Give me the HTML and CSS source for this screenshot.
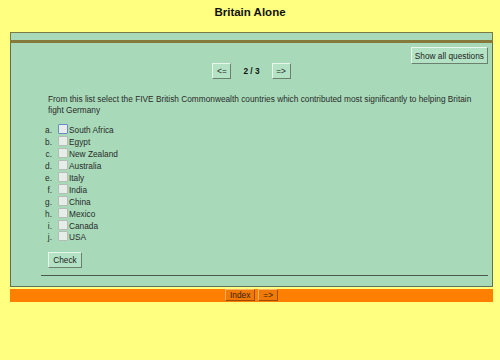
FILE: index.html
```html
<!DOCTYPE html>
<html>
<head>
<meta charset="utf-8">
<title>Britain Alone</title>
<link rel="stylesheet" href="styles.css">
</head>
<body>
<h1 class="title">Britain Alone</h1>
<div class="frame">
  <div class="topbar"></div>
  <div class="panel">
    <div class="toolbar"><button class="btn showall">Show all questions</button></div>
    <div class="nav">
      <button class="btn nav-btn">&lt;=</button>
      <span class="count">2 / 3</span>
      <button class="btn nav-btn">=&gt;</button>
    </div>
    <p class="question">From this list select the FIVE British Commonwealth countries which contributed most significantly to helping Britain fight Germany</p>
    <ol class="options">
      <li><span class="letter">a.</span><span class="box focus"></span><span class="label">South Africa</span></li>
      <li><span class="letter">b.</span><span class="box"></span><span class="label">Egypt</span></li>
      <li><span class="letter">c.</span><span class="box"></span><span class="label">New Zealand</span></li>
      <li><span class="letter">d.</span><span class="box"></span><span class="label">Australia</span></li>
      <li><span class="letter">e.</span><span class="box"></span><span class="label">Italy</span></li>
      <li><span class="letter">f.</span><span class="box"></span><span class="label">India</span></li>
      <li><span class="letter">g.</span><span class="box"></span><span class="label">China</span></li>
      <li><span class="letter">h.</span><span class="box"></span><span class="label">Mexico</span></li>
      <li><span class="letter">i.</span><span class="box"></span><span class="label">Canada</span></li>
      <li><span class="letter">j.</span><span class="box"></span><span class="label">USA</span></li>
    </ol>
    <div class="actions"><button class="btn check">Check</button></div>
    <div class="rule"></div>
  </div>
  <div class="footer">
    <button class="btn obtn">Index</button>
    <button class="btn obtn">=&gt;</button>
  </div>
</div>
</body>
</html>
```
FILE: styles.css
```css
html, body {
  margin: 0;
  padding: 0;
  background: #ffff80;
  font-family: "Liberation Sans", Arial, sans-serif;
  color: #2a2a2a;
}
.title {
  margin: 0;
  padding-top: 5px;
  height: 27px;
  box-sizing: border-box;
  text-align: center;
  font-size: 11.5px;
  font-weight: bold;
  color: #111;
  line-height: 15px;
}
.frame {
  margin-left: 10px;
  width: 483px;
  margin-top: 5px;
}
.topbar {
  height: 7px;
  background: #a8dab9;
  border: 1px solid #7a7a44;
  border-bottom: 3px solid #857a3c;
}
.panel {
  background: #a8dab9;
  border: 1px solid #5f705c;
  border-top: none;
  padding: 4px 4px 12px 4px;
  height: 244px;
  box-sizing: border-box;
  display: flex;
  flex-direction: column;
}
.toolbar {
  display: flex;
  justify-content: flex-end;
}
.btn {
  font-family: "Liberation Sans", Arial, sans-serif;
  font-size: 8.3px;
  color: #222;
  background: #b4e2c4;
  border: 1px solid;
  border-color: #e8f6ec #6c8070 #6c8070 #e8f6ec;
  padding: 0 4px;
  height: 17px;
  margin: 0;
  cursor: pointer;
}
.showall {
  padding: 0 3px;
}
.nav {
  display: flex;
  justify-content: center;
  align-items: center;
  gap: 12px;
  margin-top: -1px;
}
.nav-btn {
  width: 19px;
  height: 16px;
  padding: 0;
}
.count {
  font-size: 8.3px;
  font-weight: bold;
  color: #111;
}
.question {
  margin: 15px 0 0 33px;
  font-size: 8.3px;
  line-height: 11px;
  width: 430px;
}
.options {
  list-style: none;
  margin: 9px 0 0 0;
  padding: 0;
}
.options li {
  display: flex;
  align-items: center;
  height: 11.9px;
  font-size: 8.3px;
  line-height: 11px;
}
.letter {
  width: 37px;
  text-align: right;
  flex: none;
}
.box {
  width: 8px;
  height: 8px;
  margin-left: 6px;
  margin-top: -3px;
  background: #e6ece8;
  border: 1px solid #b4bcb6;
  border-radius: 1px;
  flex: none;
}
.box.focus {
  border-color: #6a8ac6;
}
.label {
  margin-left: 1px;
}
.actions {
  margin: 5px 0 0 33px;
}
.check {
  width: 34px;
  height: 16px;
  padding: 0;
}
.rule {
  margin: 7px 0 0 26px;
  border-top: 1px solid #4a5a4e;
  height: 0;
}
.footer {
  margin-top: 2px;
  height: 13px;
  background: #ff8000;
  display: flex;
  justify-content: center;
  gap: 3px;
}
.obtn {
  background: #f07a08;
  height: 12px;
  border-color: #ffb060 #a04c00 #a04c00 #ffb060;
  color: #3a2000;
  padding: 0 4px;
}
```
